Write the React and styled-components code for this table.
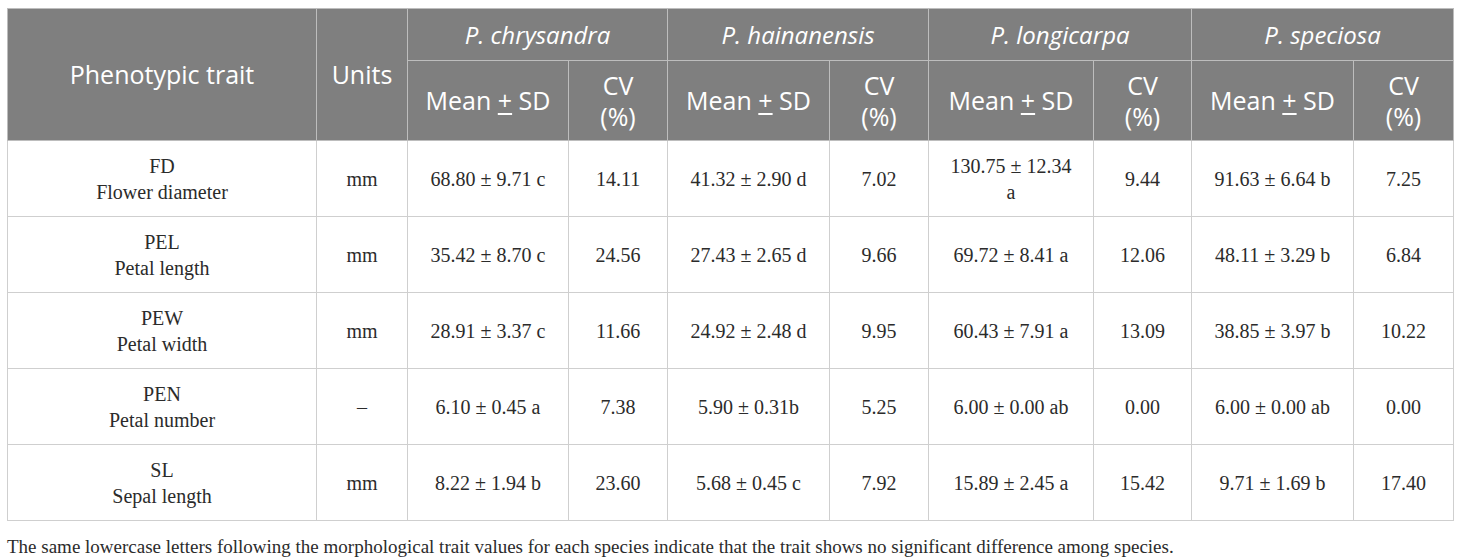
import React from "react";
import styled, { createGlobalStyle } from "styled-components";

const Global = createGlobalStyle`
  html, body { margin: 0; padding: 0; background: #ffffff; }
  body { font-family: "Liberation Serif", "Times New Roman", serif; }
`;

const Page = styled.div`
  padding: 8px 7px 0 7px;
  width: 1446px;
`;

const Table = styled.table`
  width: 1446px;
  border-collapse: collapse;
  table-layout: fixed;
`;

const HeadRow = styled.tr`
  height: ${(p) => p.$h}px;
`;

const Th = styled.th`
  background: #7f7f7f;
  color: #ffffff;
  font-family: "Open Sans", "Noto Sans", sans-serif;
  font-weight: 400;
  font-size: ${(p) => (p.$italic ? 24 : 25)}px;
  line-height: 31px;
  font-style: ${(p) => (p.$italic ? "italic" : "normal")};
  text-align: center;
  vertical-align: middle;
  border: 1px solid #bdbdbd;
  padding: 0 6px;
`;

const Row = styled.tr`
  height: 76px;
`;

const Td = styled.td`
  font-family: "Liberation Serif", "Times New Roman", serif;
  font-size: 20px;
  line-height: 26px;
  color: #2b2b2b;
  text-align: center;
  vertical-align: middle;
  border: 1px solid #cfcfcf;
  padding: 0 8px;
  white-space: pre-line;
`;

const Note = styled.p`
  margin: 14px 0 0 0;
  font-family: "Liberation Serif", "Times New Roman", serif;
  font-size: 19px;
  line-height: 24px;
  color: #2b2b2b;
`;

const PlusMinus = styled.span`
  text-decoration: underline;
  text-underline-offset: 3px;
  text-decoration-thickness: 1.5px;
`;

const species = ["P. chrysandra", "P. hainanensis", "P. longicarpa", "P. speciosa"];
const widths = [309, 91, 161, 99, 162, 99, 165, 98, 162, 100];

const rows = [
  ["FD\nFlower diameter", "mm", "68.80 ± 9.71 c", "14.11", "41.32 ± 2.90 d", "7.02", "130.75 ± 12.34\na", "9.44", "91.63 ± 6.64 b", "7.25"],
  ["PEL\nPetal length", "mm", "35.42 ± 8.70 c", "24.56", "27.43 ± 2.65 d", "9.66", "69.72 ± 8.41 a", "12.06", "48.11 ± 3.29 b", "6.84"],
  ["PEW\nPetal width", "mm", "28.91 ± 3.37 c", "11.66", "24.92 ± 2.48 d", "9.95", "60.43 ± 7.91 a", "13.09", "38.85 ± 3.97 b", "10.22"],
  ["PEN\nPetal number", "–", "6.10 ± 0.45 a", "7.38", "5.90 ± 0.31b", "5.25", "6.00 ± 0.00 ab", "0.00", "6.00 ± 0.00 ab", "0.00"],
  ["SL\nSepal length", "mm", "8.22 ± 1.94 b", "23.60", "5.68 ± 0.45 c", "7.92", "15.89 ± 2.45 a", "15.42", "9.71 ± 1.69 b", "17.40"],
];

export default function App() {
  return (
    <Page>
      <Global />
      <Table>
        <colgroup>
          {widths.map((w, i) => (
            <col key={i} style={{ width: w }} />
          ))}
        </colgroup>
        <thead>
          <HeadRow $h={52}>
            <Th rowSpan={2}>Phenotypic trait</Th>
            <Th rowSpan={2}>Units</Th>
            {species.map((s) => (
              <Th key={s} colSpan={2} $italic>
                {s}
              </Th>
            ))}
          </HeadRow>
          <HeadRow $h={80}>
            {species.map((s) => (
              <React.Fragment key={s}>
                <Th>
                  Mean <PlusMinus>+</PlusMinus> SD
                </Th>
                <Th>
                  CV
                  <br />
                  (%)
                </Th>
              </React.Fragment>
            ))}
          </HeadRow>
        </thead>
        <tbody>
          {rows.map((r, i) => (
            <Row key={i}>
              {r.map((c, j) => (
                <Td key={j}>{c}</Td>
              ))}
            </Row>
          ))}
        </tbody>
      </Table>
      <Note>
        The same lowercase letters following the morphological trait values for each species indicate that the trait shows no significant difference among species.
      </Note>
    </Page>
  );
}
